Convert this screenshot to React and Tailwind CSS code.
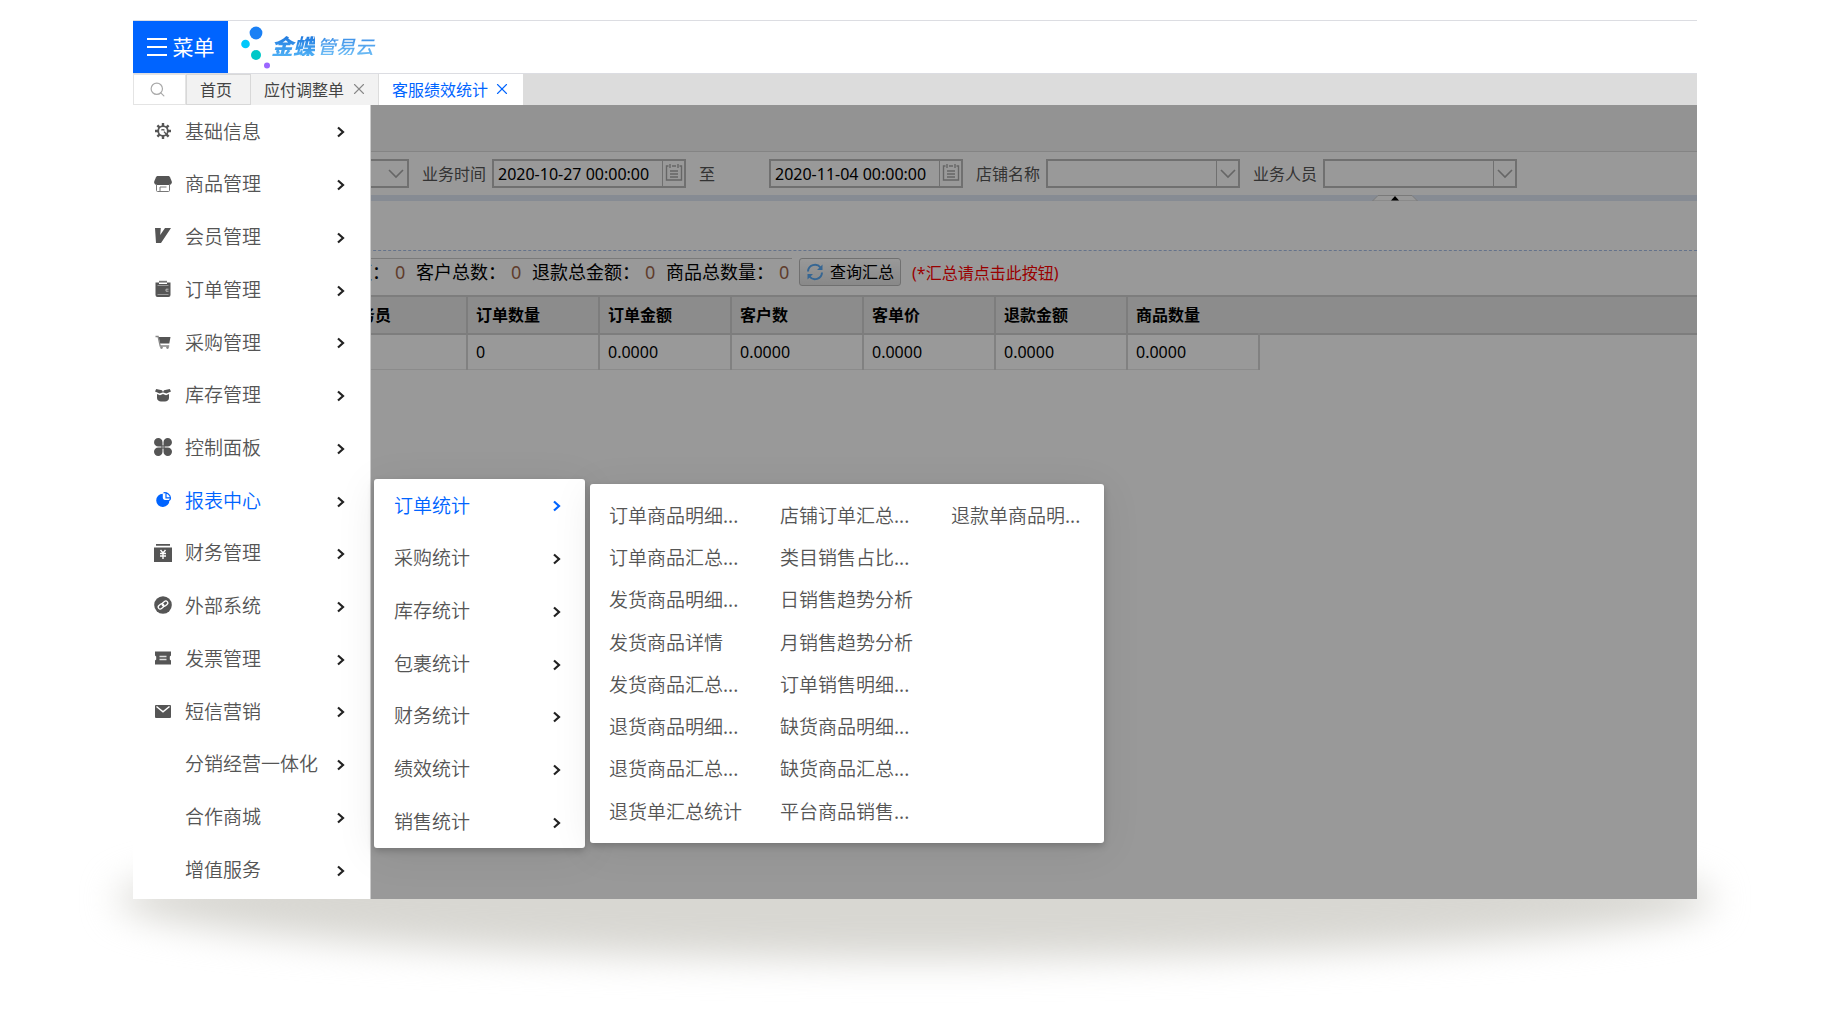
import { useState } from "react";
import { X, Search } from "lucide-react";

const MENU = [
  { name: "基础信息", icon: "gear" },
  { name: "商品管理", icon: "shop" },
  { name: "会员管理", icon: "vip" },
  { name: "订单管理", icon: "order" },
  { name: "采购管理", icon: "cart" },
  { name: "库存管理", icon: "stock" },
  { name: "控制面板", icon: "panel" },
  { name: "报表中心", icon: "report" },
  { name: "财务管理", icon: "finance" },
  { name: "外部系统", icon: "link" },
  { name: "发票管理", icon: "ticket" },
  { name: "短信营销", icon: "mail" },
  { name: "分销经营一体化" },
  { name: "合作商城" },
  { name: "增值服务" },
];

const SUB_MENU = ["订单统计", "采购统计", "库存统计", "包裹统计", "财务统计", "绩效统计", "销售统计"];

const REPORTS = [
  [
    "订单商品明细...",
    "订单商品汇总...",
    "发货商品明细...",
    "发货商品详情",
    "发货商品汇总...",
    "退货商品明细...",
    "退货商品汇总...",
    "退货单汇总统计",
  ],
  [
    "店铺订单汇总...",
    "类目销售占比...",
    "日销售趋势分析",
    "月销售趋势分析",
    "订单销售明细...",
    "缺货商品明细...",
    "缺货商品汇总...",
    "平台商品销售...",
  ],
  ["退款单商品明..."],
];

const TOTALS = [
  { label: "订单总金额：", value: 0 },
  { label: "客户总数：", value: 0 },
  { label: "退款总金额：", value: 0 },
  { label: "商品总数量：", value: 0 },
];

const COLUMNS = [
  { title: "业务员", value: "" },
  { title: "订单数量", value: "0" },
  { title: "订单金额", value: "0.0000" },
  { title: "客户数", value: "0.0000" },
  { title: "客单价", value: "0.0000" },
  { title: "退款金额", value: "0.0000" },
  { title: "商品数量", value: "0.0000" },
];

const ICONS = {
  gear: (
    <g fill="none" stroke="currentColor">
      <circle cx="9" cy="9" r="4.8" strokeWidth="1.8" />
      <path
        strokeWidth="2.4"
        d="M9 1v3M9 14v3M1 9h3M14 9h3M3.4 3.4l2 2M12.6 12.6l2 2M3.4 14.6l2-2M12.6 5.4l2-2"
      />
      <path strokeWidth="1.4" d="M10 9.6l3 3.4M7.4 8.2a2 2 0 0 1 3 .2" />
    </g>
  ),
  shop: (
    <g>
      <path d="M4 1h10c1 0 1.600.4 2 1.200L17.600 6c.8 2-.6 4-2.600 4H3C1 10-.4 8 .4 6L2 2.200C2.400 1.400 3 1 4 1z" fill="currentColor" />
      <path d="M2.500 9v6.500c0 .6.400 1 1 1h11c.6 0 1-.4 1-1V9M6 12v4.500M6 12h6.500" fill="none" stroke="#777" strokeWidth="1" />
    </g>
  ),
  vip: <path d="M1 1h5.800l-.6 7L11 1h6L7 16H2z" fill="currentColor" />,
  order: (
    <g>
      <path d="M1.500 2.500H5V4h8V2.500h3.500V15a2 2 0 0 1-2 2h-11a2 2 0 0 1-2-2z" fill="currentColor" />
      <path d="M5 .8h8v1.800H5z" fill="#777" />
      <path d="M3.500 5.500h11M3.500 14.500h11" stroke="#999" strokeWidth="1.200" />
      <path d="M14.500 9.200H12v2h2.500" fill="none" stroke="#bbb" strokeWidth="1" />
    </g>
  ),
  cart: (
    <g>
      <path d="M4.500 4H16.500l-1.200 6.500H6z" fill="currentColor" />
      <path d="M1.500 3.500h2.600L6.200 13h9" fill="none" stroke="#888" strokeWidth="1.300" />
      <circle cx="7.500" cy="14.600" r="1.300" fill="#888" />
      <circle cx="13.500" cy="14.600" r="1.300" fill="#888" />
    </g>
  ),
  stock: (
    <path
      d="M2.200 3 8 4.200 9 6l1-1.800L15.800 3 17 5.400l-4.600 2.200L9.500 6.500h-1L5.600 7.600 1 5.400zM3 8l3 1.200L9 8l3 1.200L15 8v4c0 2-2 3.500-4 3.500H7C5 15.500 3 14 3 12z"
      fill="currentColor"
    />
  ),
  panel: (
    <g fill="currentColor">
      <path d="M4.300 0a4.200 4.200 0 0 1 4.200 4.200v4.300H4.300a4.250 4.250 0 0 1 0-8.500zM13.700 0a4.250 4.250 0 0 1 0 8.500H9.500V4.200A4.200 4.200 0 0 1 13.700 0zM4.300 9.500h4.200v4.300a4.250 4.250 0 1 1-4.200-4.300zM9.500 9.500h4.200a4.250 4.250 0 1 1-4.200 4.300z" />
      <path d="M7 7h4v4H7z" opacity=".6" />
    </g>
  ),
  report: (
    <g>
      <path d="M8.800 2.800v4c0 1.200 1 2.200 2.200 2.200h4.400A6.600 6.600 0 1 1 8.800 2.800z" fill="currentColor" />
      <path d="M9.500 1.800c3.600-.6 6.800 1.800 7 5.200 0 1.200-.6 2-1.400 2.600M12 2.200v4.600h4" fill="none" stroke="currentColor" strokeWidth="1.200" />
    </g>
  ),
  finance: (
    <g>
      <path d="M2 0h14v1.800H2zM0 3.500h18V18H0z" fill="currentColor" />
      <path d="M6.500 6 9 9l2.500-3M6 9.500h6M6 12h6M9 9v6" fill="none" stroke="#fff" strokeWidth="1.400" />
    </g>
  ),
  link: (
    <g>
      <circle cx="9" cy="9" r="8.800" fill="currentColor" />
      <g fill="none" stroke="#fff" strokeWidth="1.300" transform="rotate(-40 9 9)">
        <rect x="3.600" y="6.800" width="6" height="4" rx="2" />
        <rect x="8.400" y="7.200" width="6" height="4" rx="2" />
      </g>
    </g>
  ),
  ticket: (
    <g>
      <path d="M1 2.500h16v4l-1.200 1v3l1.200 1v4H1v-4l1.200-1v-3L1 6.500z" fill="currentColor" />
      <path d="M5.500 7.500h7M5.500 10.500h7" stroke="#ddd" strokeWidth="1.300" />
    </g>
  ),
  mail: (
    <g>
      <rect x="1" y="3" width="16" height="13" rx="1" fill="currentColor" />
      <path d="m2.500 4.500 6.500 5.300 6.500-5.300" fill="none" stroke="#fff" strokeWidth="1.500" />
    </g>
  ),
};

function MenuIcon({ name }) {
  return (
    <svg viewBox="0 0 18 18" className="mx-auto h-[18px] w-[18px]" aria-hidden="true">
      {ICONS[name]}
    </svg>
  );
}

function Arrow({ className }) {
  return (
    <svg viewBox="0 0 8 12" className={`mt-[3px] h-3 w-2 shrink-0 ${className}`} aria-hidden="true">
      <path d="M1 1.500 6 6 1 10.500" fill="none" stroke="currentColor" strokeWidth="2.200" />
    </svg>
  );
}

function Logo() {
  return (
    <div className="flex items-center">
      <svg viewBox="0 0 30 44" className="h-11 w-[30px]" aria-hidden="true">
        <circle cx="15" cy="8" r="6.400" fill="#1a80f5" />
        <circle cx="4.500" cy="19" r="4.300" fill="#00c8fb" />
        <circle cx="15" cy="30" r="5" fill="#00c8c8" />
        <circle cx="26" cy="40.500" r="3" fill="#9b66ff" />
      </svg>
      <div className="-mt-1 flex items-center gap-0.5 leading-none italic">
        <span className="bg-linear-to-b from-[#1c74dc] to-[#4fb0f5] bg-clip-text text-[22px] font-black text-transparent">
          金蝶
        </span>
        <span className="bg-linear-to-b from-[#3a8ce6] to-[#6cbcf5] bg-clip-text pr-1 text-[19px] font-medium text-transparent">
          管易云
        </span>
      </div>
    </div>
  );
}

function Field({ id, label, children }) {
  return (
    <div className="flex items-center gap-1.5">
      <label htmlFor={id} className="w-16 whitespace-nowrap text-[#555]">
        {label}
      </label>
      {children}
    </div>
  );
}

function DateInput({ id, value, label }) {
  return (
    <div className="flex h-[29px] w-[194px] border-2 border-[#bbb]">
      <input
        id={id}
        aria-label={label}
        defaultValue={value}
        className="w-full min-w-0 flex-1 pl-1 text-black outline-none"
      />
      <button type="button" aria-label="选择日期" className="flex w-[22px] shrink-0 justify-center border-l border-[#bbb] pt-0.5">
        <svg viewBox="0 0 18 18" className="h-[18px] w-[18px]" aria-hidden="true">
          <path
            d="M3.500 3H1.500v14h15V3h-2M7 3h4M5 1v4M13 1v4M5 8h8M5 11h8M5 14h8"
            fill="none"
            stroke="#aaa"
            strokeWidth="1.400"
          />
        </svg>
      </button>
    </div>
  );
}

function Combo({ id, label, divider = true }) {
  return (
    <div className="relative h-[29px] w-[194px] border-2 border-[#bbb]">
      <select id={id} aria-label={label} className="h-full w-full appearance-none outline-none">
        <option value=""></option>
      </select>
      <span
        className={`pointer-events-none absolute inset-y-0 right-0 flex w-[22px] items-center justify-center border-[#bbb] ${divider ? "border-l" : ""}`}
      >
        <svg viewBox="0 0 16 10" className="h-2.5 w-4" aria-hidden="true">
          <path d="m1 1 7 7 7-7" fill="none" stroke="#aaa" strokeWidth="1.600" />
        </svg>
      </span>
    </div>
  );
}

function Report() {
  return (
    <div className="font-['Noto_Sans','Noto_Sans_CJK_SC',sans-serif] text-base">
      <div className="h-[47px] border-b border-[#ddd] bg-[#f5f5f5]" />

      <form className="flex h-[43px] items-center gap-[13px] pl-3">
        <Field id="group">
          <Combo id="group" label="分组" divider={false} />
        </Field>
        <Field id="from" label="业务时间">
          <DateInput id="from" value="2020-10-27 00:00:00" />
        </Field>
        <Field id="to" label="至">
          <DateInput id="to" value="2020-11-04 00:00:00" />
        </Field>
        <Field id="shop" label="店铺名称">
          <Combo id="shop" />
        </Field>
        <Field id="staff" label="业务人员">
          <Combo id="staff" />
        </Field>
      </form>

      <div className="relative h-1.5 bg-[#dfe8f6]">
        <button type="button" aria-label="收起" className="absolute top-0 right-[279px] block">
          <svg viewBox="0 0 46 6" className="h-1.5 w-[46px]" aria-hidden="true">
            <path d="M.5 6 6 .5h34l5.500 5.500z" fill="#fff" stroke="#ccc" />
            <path d="M19 5.500 23 1l4 4.500z" fill="#000" />
          </svg>
        </button>
      </div>

      <div className="h-[50px] border-b border-dashed border-[#a8c0e8]" />

      <div className="flex items-start gap-[7px] pt-[7px] pb-[7px]">
        <dl className="flex gap-[11px] border-t border-[#ccc] pr-[3px] pl-[149px] text-lg leading-[26px]">
          {TOTALS.map((t) => (
            <div key={t.label} className="flex gap-[5px]">
              <dt className="text-black">{t.label}</dt>
              <dd className="w-2.5 text-[#a0674b]">{t.value}</dd>
            </div>
          ))}
        </dl>
        <button
          type="button"
          className="flex h-[28px] items-center gap-1.5 rounded-[3px] border border-[#bbb] bg-linear-to-b from-white to-[#e4e4e4] px-[6px] text-black"
        >
          <svg viewBox="0 0 18 18" className="h-[18px] w-[18px]" aria-hidden="true">
            <path
              d="M2 8.500A7 7 0 0 1 14.500 4.500M16 9.500A7 7 0 0 1 3.500 13.500"
              fill="none"
              stroke="#5aaaf5"
              strokeWidth="2"
            />
            <path d="M16.500 1.500V7h-5.500zM1.500 16.500V11H7z" fill="#5aaaf5" />
          </svg>
          查询汇总
        </button>
        <p className="pl-1 leading-[30px] text-[#ff0000]">(*汇总请点击此按钮)</p>
      </div>

      <table className="w-full table-fixed border-t border-[#ddd] text-left text-black">
        <thead>
          <tr className="h-[38px] border-y-2 border-[#d0d0d0] bg-[#e9e9e9]">
            <td className="w-[202px]" />
            {COLUMNS.map((c, i) => (
              <th
                key={c.title}
                className={`w-[132px] border-[#d0d0d0] pl-2 font-bold ${i < COLUMNS.length - 1 ? "border-r-2" : ""}`}
              >
                {c.title}
              </th>
            ))}
            <td />
          </tr>
        </thead>
        <tbody>
          <tr className="h-[35px]">
            <td className="border-b border-[#e8e8e8]" />
            {COLUMNS.map((c) => (
              <td key={c.title} className="border-r-2 border-b border-r-[#d8d8d8] border-b-[#e8e8e8] pl-2">
                {c.value}
              </td>
            ))}
            <td />
          </tr>
        </tbody>
      </table>
    </div>
  );
}

export default function App() {
  const [active, setActive] = useState("报表中心");
  const [activeSub, setActiveSub] = useState("订单统计");

  return (
    <div className="flex min-h-screen flex-col bg-white pt-5 pr-[141px] pb-[131px] pl-[133px] font-['Noto_Sans_CJK_SC',sans-serif]">
      <div className="relative isolate flex flex-1 flex-col">
        <div className="absolute -inset-x-4 -bottom-[60px] -z-10 h-[120px] rounded-[50%] bg-[#d8d7d2] blur-[18px]" />

        <header className="flex h-[54px] border-y border-[#dcdde2] bg-white">
          <button type="button" className="flex w-[95px] items-center justify-center gap-1.5 bg-[#0064ff] text-[21px] text-white">
            <svg viewBox="0 0 20 18" className="h-[18px] w-5" aria-hidden="true">
              <path d="M0 1h20M0 9h20M0 17h20" stroke="currentColor" strokeWidth="1.800" />
            </svg>
            菜单
          </button>
          <div className="flex items-center pl-[13px]">
            <Logo />
          </div>
        </header>

        <nav className="flex h-[31px] bg-[#dcdcdc] text-base text-[#444]">
          <button type="button" aria-label="搜索" className="flex w-[53px] items-center border border-[#e4e4e4] bg-white pl-[15px]">
            <Search size={17} strokeWidth={1.7} color="#aaa" />
          </button>
          <a href="#home" className="flex w-[65px] items-center border border-[#d8d8d8] bg-[#f2f2f2] pb-0.5 pl-[13px]">
            首页
          </a>
          <div className="flex w-[127px] items-center gap-1.5 bg-[#f2f2f2] pb-0.5 pl-[13px]">
            <a href="#adjust">应付调整单</a>
            <button type="button" aria-label="关闭应付调整单">
              <X size={18} strokeWidth={1.5} color="#888" />
            </button>
          </div>
          <div className="flex w-[145px] items-center gap-[5px] border-l border-[#ddd] bg-white pb-0.5 pl-[13px] text-[#0064ff]">
            <a href="#performance">客服绩效统计</a>
            <button type="button" aria-label="关闭客服绩效统计">
              <X size={18} strokeWidth={1.5} />
            </button>
          </div>
        </nav>

        <main className="relative flex flex-1 bg-white">
          <div className="w-full min-w-0 overflow-hidden">
            <Report />
          </div>
          <div className="absolute inset-0 bg-black/40" />

          <aside className="absolute inset-y-0 left-0 flex w-[238px] flex-col border-r border-[#ccc] bg-white pb-[3px] text-[19px] font-[350] text-[#555]">
            {MENU.map((item) => (
              <button
                key={item.name}
                type="button"
                onClick={() => setActive(item.name)}
                className={`flex flex-1 items-center pr-[25px] pb-px pl-5 ${active === item.name ? "text-[#0064ff]" : ""}`}
              >
                <span className="w-5">{item.icon && <MenuIcon name={item.icon} />}</span>
                <span className="flex-1 pl-3 text-left whitespace-nowrap">{item.name}</span>
                <Arrow className="text-[#222]" />
              </button>
            ))}
          </aside>

          <div className="absolute top-[374px] left-[241px] flex h-[369px] w-[211px] flex-col rounded-[3px] bg-white text-[19px] font-[350] text-[#555] shadow-[0_3px_7px_rgba(0,0,0,0.2),0_6px_40px_rgba(0,0,0,0.08)]">
            {SUB_MENU.map((name) => (
              <button
                key={name}
                type="button"
                onClick={() => setActiveSub(name)}
                className={`flex flex-1 items-center justify-between pr-6 pb-px pl-5 ${activeSub === name ? "text-[#0064ff]" : ""}`}
              >
                {name}
                <Arrow className={activeSub === name ? "" : "text-[#222]"} />
              </button>
            ))}
          </div>

          <div className="absolute top-[379px] left-[457px] grid h-[359px] w-[514px] grid-cols-[171px_171px_1fr] rounded-[3px] bg-white pt-2.5 pb-[11px] pl-[19px] text-[19px] font-[350] text-[#555] shadow-[0_3px_7px_rgba(0,0,0,0.2),0_6px_40px_rgba(0,0,0,0.08)]">
            {REPORTS.map((list, i) => (
              <ul key={i} className="grid grid-rows-8">
                {list.map((name) => (
                  <li key={name} className="flex items-center whitespace-nowrap">
                    <a href="#report">{name}</a>
                  </li>
                ))}
              </ul>
            ))}
          </div>
        </main>
      </div>
    </div>
  );
}
